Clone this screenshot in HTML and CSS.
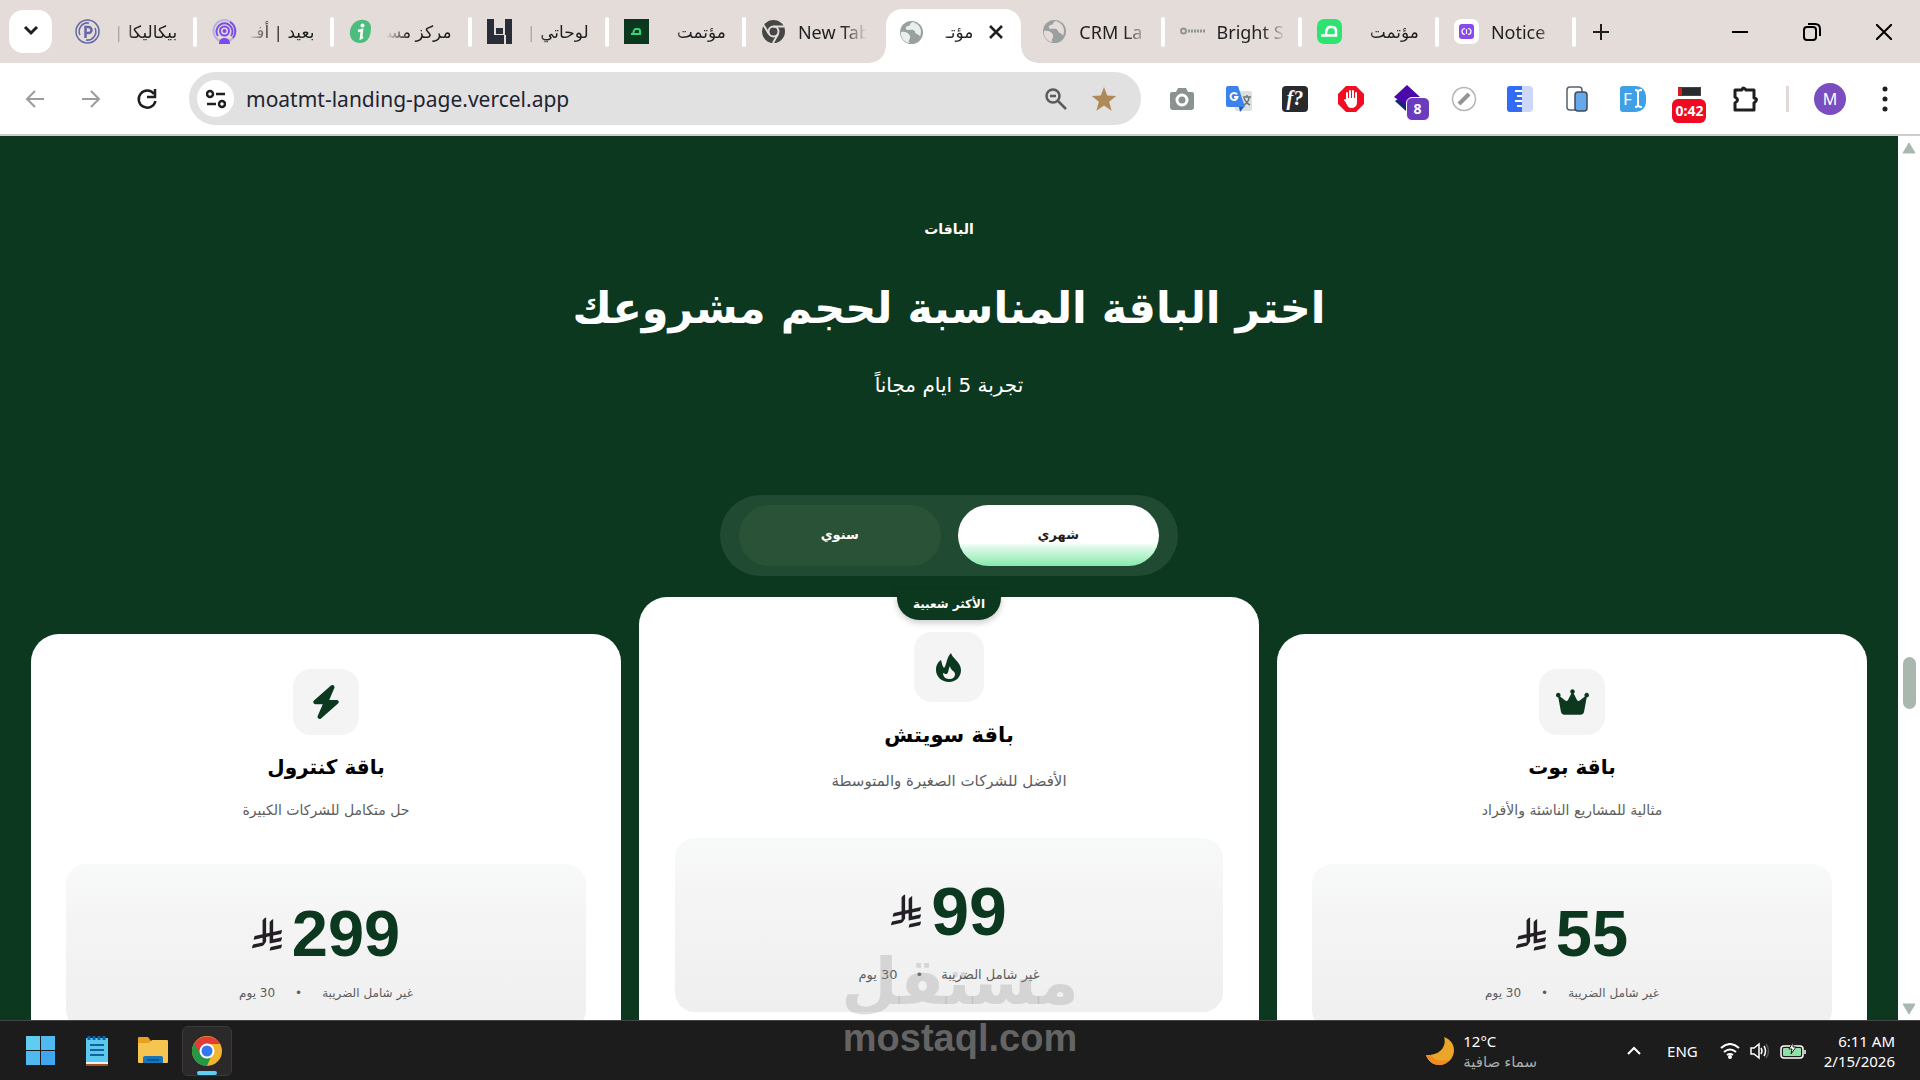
FILE: index.html
```html
<!DOCTYPE html>
<html lang="ar">
<head>
  <meta charset="UTF-8">
  <meta name="viewport" content="width=device-width, initial-scale=1.0">
  <title>مؤتمت</title>
  <link rel="stylesheet" href="styles.css">
</head>
<body>

  <!-- Tab Strip -->
  <header class="tab-strip">
    <button class="tab-search" aria-label="Search tabs">
      <svg width="16" height="12" viewBox="0 0 16 12" fill="none" stroke="#1f1f1f" stroke-width="3"><path d="M2 2l6 6 6-6"/></svg>
    </button>
    <nav class="tabs">
      <a class="tab" href="#">
        <svg class="favicon" viewBox="0 0 25 25" fill="none" stroke="#6767a8" stroke-width="1.5"><circle cx="12.5" cy="12.5" r="11.5"/><path d="M5 16a8.500 8.500 0 0 1 9-12M20 9a8.500 8.500 0 0 1-9 12"/><path d="M10.500 19V8h3a3 3 0 0 1 0 6h-3" stroke-width="2.500"/></svg>
        <span class="tab-title rtl">بيكاليكا |</span>
      </a>
      <a class="tab" href="#">
        <svg class="favicon" viewBox="0 0 25 25" fill="none"><circle cx="12.500" cy="12" r="11" stroke="#b8b5dc" stroke-width="2"/><path d="M18 3a11 11 0 0 1 3 16M6 17a8 8 0 1 1 13 0" stroke="#7d4be8" stroke-width="2"/><circle cx="12.500" cy="12" r="4.500" stroke="#7d4be8" stroke-width="2"/><circle cx="12.500" cy="12" r="2" fill="#7d4be8"/><path d="M7 25c0-4 2-6 5.500-6s5.500 2 5.500 6z" fill="#7d4be8"/></svg>
        <span class="tab-title rtl">بعيد | أفـ</span>
      </a>
      <a class="tab" href="#">
        <svg class="favicon" viewBox="0 0 25 25"><path d="M8 2C14-1 22 1 22 9c0 9-4 15-11 15S0 19 1 12C2 7 4 4 8 2z" fill="#4dbd7e"/><circle cx="13.500" cy="6.500" r="2" fill="#fff"/><path d="M9 12l4-1-1 8 2-1" stroke="#fff" stroke-width="2.500" fill="none"/></svg>
        <span class="tab-title rtl">مركز مسـ</span>
      </a>
      <a class="tab" href="#">
        <svg class="favicon" viewBox="0 0 25 25" fill="#282d37"><path d="M0 0h7v16h10v9H0zM9 9h7v6H9zM18 0h7v25h-6V16h-1z"/></svg>
        <span class="tab-title rtl">لوحاتي |</span>
      </a>
      <a class="tab" href="#">
        <svg class="favicon" viewBox="0 0 25 25"><path d="M0 0h25v25H0z" fill="#0b381e"/><path d="M7 15h9V12q0-2-2-2h-2q-2 0-3 5" fill="none" stroke="#30d975" stroke-width="2"/></svg>
        <span class="tab-title rtl">مؤتمت</span>
      </a>
      <a class="tab no-line" href="#">
        <svg class="favicon" viewBox="0 0 25 25"><circle cx="12.500" cy="12.500" r="11.500" fill="#444746"/><circle cx="12.500" cy="12.500" r="5" fill="#444746" stroke="#e3dcd9" stroke-width="2"/><path d="M12.500 7.500H23M8 15L2.500 6M17 15l-5 9" stroke="#e3dcd9" stroke-width="2"/></svg>
        <span class="tab-title">New Tab</span>
      </a>
      <a class="tab active" href="#">
        <svg class="favicon" viewBox="0 0 25 25"><circle cx="12.500" cy="12.500" r="11.500" fill="#9aa0a0"/><path d="M14 2c-4 1-2 4-5 4s-3 4 0 4 6-1 7 2 5 2 5 5c3-8-1-13-7-15zM2 12c4-1 8 1 9 4s-3 5 0 7C6 23 1 18 2 12z" fill="#e9eeee"/></svg>
        <span class="tab-title rtl">مؤتـ</span>
        <svg class="tab-close" viewBox="0 0 14 14" stroke="#1f1f1f" stroke-width="2.500"><path d="M1 1l12 12M13 1L1 13"/></svg>
      </a>
      <a class="tab" href="#">
        <svg class="favicon" viewBox="0 0 25 25"><circle cx="12.500" cy="12.500" r="11.500" fill="#9aa0a0"/><path d="M14 2c-4 1-2 4-5 4s-3 4 0 4 6-1 7 2 5 2 5 5c3-8-1-13-7-15zM2 12c4-1 8 1 9 4s-3 5 0 7C6 23 1 18 2 12z" fill="#e3dcd9"/></svg>
        <span class="tab-title">CRM La</span>
      </a>
      <a class="tab" href="#">
        <svg class="favicon" viewBox="0 0 25 25" fill="none" stroke="#8d9693"><circle cx="3.500" cy="12" r="2.500" stroke-width="2"/><path d="M8 12h17" stroke-width="3" stroke-dasharray="2 1"/></svg>
        <span class="tab-title">Bright S</span>
      </a>
      <a class="tab" href="#">
        <svg class="favicon" viewBox="0 0 25 25"><rect width="25" height="25" rx="7" fill="#2fe373"/><path d="M4 16.500h15V12q0-4-4-4h-2q-4 0-4 8" fill="none" stroke="#fff" stroke-width="2.500"/></svg>
        <span class="tab-title rtl">مؤتمت</span>
      </a>
      <a class="tab" href="#">
        <svg class="favicon" viewBox="0 0 25 25"><rect width="25" height="25" rx="7" fill="#fff"/><rect x="5" y="5" width="15" height="15" rx="3" fill="#8d48ec"/><path d="M11 9.500c-4 0-4 6 0 6M14 9.500c4 0 4 6 0 6M12.500 10v5" fill="none" stroke="#fff" stroke-width="1.200"/></svg>
        <span class="tab-title">Notice</span>
      </a>
    </nav>
    <button class="icon-btn new-tab" aria-label="New tab">
      <svg width="16" height="20" viewBox="0 0 16 20" stroke="#1f1f1f" stroke-width="2"><path d="M0 10h16M8 2v16"/></svg>
    </button>
    <div class="window-controls">
      <button class="icon-btn" aria-label="Minimize"><svg width="16" height="16" stroke="#000" stroke-width="2"><path d="M0 8h16"/></svg></button>
      <button class="icon-btn" aria-label="Restore"><svg width="18" height="18" fill="none" stroke="#000" stroke-width="2"><rect x="1" y="4" width="12" height="13" rx="3"/><path d="M5 1h7q5 0 5 5v7"/></svg></button>
      <button class="icon-btn" aria-label="Close"><svg width="16" height="16" stroke="#000" stroke-width="2"><path d="M0 0l16 16M16 0L0 16"/></svg></button>
    </div>
  </header>

  <!-- Toolbar -->
  <div class="toolbar">
    <div class="nav-buttons">
      <button class="icon-btn" aria-label="Back"><svg width="20" height="20" fill="none" stroke="#9c9c9c" stroke-width="2"><path d="M19 10H2M10 2l-8 8 8 8"/></svg></button>
      <button class="icon-btn" aria-label="Forward"><svg width="20" height="20" fill="none" stroke="#9c9c9c" stroke-width="2"><path d="M1 10h17M10 2l8 8-8 8"/></svg></button>
      <button class="icon-btn" aria-label="Reload"><svg width="22" height="22" fill="none" stroke="#1f1f1f" stroke-width="2.500"><path d="M18 6a8.500 8.500 0 1 0 1.500 7"/><path d="M19 1v8h-8"/></svg></button>
    </div>
    <div class="omnibox">
      <button class="site-info" aria-label="Site information">
        <svg width="20" height="20" fill="none" stroke="#1f1f1f" stroke-width="2.500"><circle cx="4" cy="5" r="3"/><path d="M10 5h9M1 15h9"/><circle cx="16" cy="15" r="3"/></svg>
      </button>
      <input class="address" type="text" aria-label="Address" value="moatmt-landing-page.vercel.app">
      <button class="icon-btn" aria-label="Zoom"><svg width="22" height="22" fill="none" stroke="#5b5b5b" stroke-width="2.500"><circle cx="8" cy="8" r="6.500"/><path d="M5 8h6M13 13l8 8"/></svg></button>
      <button class="icon-btn" aria-label="Bookmark"><svg width="26" height="24" viewBox="0 0 26 24" fill="#ad8a57"><path d="M13 0l3.200 8.500 9 .4-7 5.800 2.400 9L13 18.600l-7.600 5.100 2.400-9-7-5.800 9-.4z"/></svg></button>
    </div>
    <div class="extensions">
      <svg width="24" height="24"><path d="M2 5h4l2-4h8l2 4h4q2 0 2 2v13q0 3-3 3H3q-3 0-3-3V7q0-2 2-2z" fill="#8b9390"/><circle cx="12" cy="13" r="5" fill="none" stroke="#fff" stroke-width="3"/></svg>
      <svg width="26" height="26"><rect x="9" y="5" width="17" height="20" rx="2" fill="#dce0e0"/><path d="M17 11h8M21 9v2M18 19q5-3 5-8M18 12q2 5 6 7" stroke="#6c7676" stroke-width="1.500" fill="none"/><path d="M2 0h10l7 21H2q-2 0-2-2V2q0-2 2-2z" fill="#3b82ec"/><path d="M13 21h5l-4 5z" fill="#2856b8"/><path d="M11 8.500a3.500 3.500 0 1 0 .5 2.500H8" stroke="#fff" stroke-width="2" fill="none"/></svg>
      <span class="ext-font">f?</span>
      <svg width="26" height="26"><path d="M8 0h10l8 8v10l-8 8H8l-8-8V8z" fill="#f20d20"/><path d="M9 14V7M12 13V5M15 13V5M18 15V7M7 14l4 5" stroke="#fff" stroke-width="2" stroke-linecap="round"/><path d="M8 12h11v4q0 6-6 6-3 0-5-5z" fill="#fff"/></svg>
      <span class="ext-stack"><svg width="28" height="28"><path d="M13 8l13 8-13 11L1 16z" fill="#152774"/><path d="M13 0l13 12-13 9L0 12z" fill="#4b08ab"/></svg><span class="count">8</span></span>
      <svg width="26" height="26"><circle cx="13" cy="13" r="11.500" fill="#fff" stroke="#b3b6b5" stroke-width="1.500"/><path d="M8 18l10-10" stroke="#929593" stroke-width="4"/></svg>
      <svg width="26" height="26"><rect width="26" height="26" rx="4" fill="#cdd8f8"/><path d="M3 0h12v26H3q-3 0-3-3V3q0-3 3-3z" fill="#326cf5"/><path d="M8 5h7M10 10h5M8 15h7M10 20h5" stroke="#fff" stroke-width="2"/></svg>
      <svg width="24" height="26"><rect x="2" y="1" width="15" height="23" rx="3" fill="#fff" stroke="#536170" stroke-width="1.500"/><rect x="10" y="6" width="12" height="19" rx="3" fill="#65a9ed" stroke="#3e4b58" stroke-width="1.500"/></svg>
      <span class="ext-fi">F<svg width="9" height="19" fill="none" stroke="#fff" stroke-width="2"><path d="M1 1q3 0 3 2 0-2 4-2M4 3v13M1 18q3 0 3-2 0 2 4 2"/></svg></span>
      <span class="ext-timer"><span class="screen"></span><span class="time">0:42</span></span>
      <svg width="28" height="28" fill="none" stroke="#1f1f1f" stroke-width="3"><path d="M3 5h7q1-4 4 0h8v8q5 1 0 5v7H3v-7q5-3 0-6z" stroke-linejoin="round"/></svg>
    </div>
    <span class="divider"></span>
    <button class="avatar" aria-label="Profile">M</button>
    <button class="icon-btn menu" aria-label="Menu"><svg width="6" height="26" fill="#1f1f1f"><circle cx="3" cy="3" r="2.500"/><circle cx="3" cy="13" r="2.500"/><circle cx="3" cy="23" r="2.500"/></svg></button>
  </div>

  <!-- Page -->
  <div class="viewport">
    <main class="pricing" dir="rtl">
      <p class="eyebrow">الباقات</p>
      <h1>اختر الباقة المناسبة لحجم مشروعك</h1>
      <p class="subtitle">تجربة 5 ايام مجاناً</p>

      <div class="billing-toggle">
        <button class="period selected">شهري</button>
        <button class="period">سنوي</button>
      </div>

      <div class="plans">
        <section class="plan">
          <span class="plan-icon">
            <svg width="33" height="30" viewBox="0 0 576 512" fill="#0b381e"><path d="M309 106c11.400-7 19-19.700 19-34c0-22.100-17.900-40-40-40s-40 17.900-40 40c0 14.400 7.600 27 19 34L209.700 220.600c-9.100 18.200-32.700 23.400-48.600 10.700L72 160c5-6.700 8-15 8-24c0-22.100-17.900-40-40-40S0 113.900 0 136s17.900 40 40 40h.7L86.400 427.400c5.500 30.400 32 52.600 63 52.600H426.600c30.900 0 57.400-22.100 63-52.600L535.300 176h.7c22.100 0 40-17.900 40-40s-17.900-40-40-40s-40 17.900-40 40c0 9 3 17.300 8 24l-89.100 71.300c-15.900 12.700-39.500 7.500-48.600-10.700L309 106z"/></svg>
          </span>
          <h2>باقة بوت</h2>
          <p class="plan-text">مثالية للمشاريع الناشئة والأفراد</p>
          <div class="price-box">
            <div class="price">55 <svg class="riyal" viewBox="0 0 1124 1256"><use href="#riyal"/></svg></div>
            <p class="price-note"><span>غير شامل الضريبة</span><span>•</span><span>30 يوم</span></p>
          </div>
        </section>

        <section class="plan featured">
          <span class="badge">الأكثر شعبية</span>
          <span class="plan-icon">
            <svg width="26" height="29" viewBox="0 0 26 29"><path d="M15 0c1 5 10 9 10 17 0 7-5 12-12 12S0 24 0 17C0 12 2 9 5 7c1 3 1 6 3 8 3-3 2-10 7-15z" fill="#0b381e"/><path d="M14 13c0 4 5 5 5 8 0 3-2 5-6 5s-6-3-6-6c2 1 3 1 4 1 2-2 1-5 3-8z" fill="#f4f4f4"/></svg>
          </span>
          <h2>باقة سويتش</h2>
          <p class="plan-text">الأفضل للشركات الصغيرة والمتوسطة</p>
          <div class="price-box">
            <div class="price">99 <svg class="riyal" viewBox="0 0 1124 1256"><use href="#riyal"/></svg></div>
            <p class="price-note"><span>غير شامل الضريبة</span><span>•</span><span>30 يوم</span></p>
          </div>
        </section>

        <section class="plan">
          <span class="plan-icon">
            <svg width="30" height="34" viewBox="0 0 448 512" fill="#0b381e"><path d="M349.400 44.600c5.900-13.700 1.500-29.700-10.600-38.500s-28.600-8-39.900 1.800l-256 224c-10 8.800-13.600 22.900-8.900 35.300S50.700 288 64 288H175.500L98.600 467.400c-5.900 13.700-1.500 29.700 10.600 38.500s28.600 8 39.900-1.800l256-224c10-8.800 13.600-22.900 8.900-35.300s-16.600-20.700-30-20.700H272.500L349.400 44.600z"/></svg>
          </span>
          <h2>باقة كنترول</h2>
          <p class="plan-text">حل متكامل للشركات الكبيرة</p>
          <div class="price-box">
            <div class="price">299 <svg class="riyal" viewBox="0 0 1124 1256"><use href="#riyal"/></svg></div>
            <p class="price-note"><span>غير شامل الضريبة</span><span>•</span><span>30 يوم</span></p>
          </div>
        </section>
      </div>
    </main>

    <div class="scrollbar">
      <svg width="14" height="12" fill="#a9b8ae"><path d="M7 1l6 10H1z" stroke="#a9b8ae" stroke-linejoin="round"/></svg>
      <span class="track"><span class="thumb"></span></span>
      <svg width="14" height="12" fill="#a9b8ae"><path d="M7 11l6-10H1z" stroke="#a9b8ae" stroke-linejoin="round"/></svg>
    </div>
  </div>

  <!-- Taskbar -->
  <footer class="taskbar">
    <div class="apps">
      <button class="icon-btn" aria-label="Start"><svg width="30" height="30"><path d="M0 0h14v14H0z" fill="#5fcdf1"/><path d="M15 0h14v14H15zM0 15h14v14H0z" fill="#50b9ef"/><path d="M15 15h14v14H15z" fill="#3ea7ee"/></svg></button>
      <button class="icon-btn" aria-label="Notepad"><svg width="22" height="30"><path d="M0 2h22v25H0z" fill="#5cc8ee"/><path d="M0 26h22v2H0z" fill="#f0f0f0"/><path d="M0 28h22v2H0z" fill="#a5501f"/><path d="M4 9h14M4 14h14M4 19h14" stroke="#10629e" stroke-width="2"/><path d="M3 0v4M8 0v4M13 0v4M18 0v4" stroke="#0d62a8" stroke-width="3"/></svg></button>
      <button class="icon-btn" aria-label="Files"><svg width="30" height="27"><path d="M0 1q0-1 1-1h9l3 4v8H0z" fill="#e9a01e"/><path d="M0 6h11l3-3h15q1 0 1 1v21q0 1-1 1H1q-1 0-1-1z" fill="#f6c450"/><path d="M5 26v-5q0-2 2-2h16q2 0 2 2v5z" fill="#1675bb"/><path d="M9 23h12" stroke="#0d4f8a" stroke-width="1.500"/></svg></button>
      <button class="icon-btn running" aria-label="Chrome"><svg width="30" height="30"><circle cx="15" cy="15" r="15" fill="#f3b530"/><path d="M15 15V8h13A15 15 0 0 0 2 8l6 10z" fill="#e33b36"/><path d="M2 7.500l7 11 10 2-4 9.500A15 15 0 0 1 2 7.500z" fill="#279745"/><circle cx="15" cy="15" r="7.500" fill="#fff"/><circle cx="15" cy="15" r="5.500" fill="#3478f0"/></svg></button>
    </div>
    <div class="tray">
      <div class="weather">
        <svg width="28" height="28"><path d="M18 0c3 8-3 19-18 18 2 6 7 10 13 10 9 0 15-7 15-15C28 7 24 2 18 0z" fill="#eba528"/><path d="M0 18c2 6 7 10 13 10 5 0 8-2 10-5-8 2-15 0-18-5z" fill="#f08a24"/></svg>
        <p>12°C<br><span>سماء صافية</span></p>
      </div>
      <button class="icon-btn" aria-label="Hidden icons"><svg width="14" height="10" fill="none" stroke="#fff" stroke-width="2"><path d="M1 8l6-6 6 6"/></svg></button>
      <span class="language">ENG</span>
      <div class="status">
        <svg width="20" height="16" fill="none" stroke="#fff" stroke-width="2"><path d="M1 5q9-8 18 0M4 9q6-5 12 0M7 12q3-2 6 0"/><circle cx="10" cy="14" r="1" fill="#fff"/></svg>
        <svg width="20" height="18" fill="none" stroke="#fff" stroke-width="1.500"><path d="M1 6h3l5-4v14l-5-4H1zM11 6q2 3 0 6M14 4q3 5 0 10"/><path d="M16 2q5 7 0 14" stroke="#555"/></svg>
        <svg width="26" height="18" fill="none" stroke="#fff" stroke-width="1.500"><rect x="1" y="4" width="22" height="12" rx="3"/><rect x="3" y="6" width="18" height="8" rx="1" fill="#8ee0a8" stroke="none"/><path d="M25 8v4"/><path d="M13 0L9 7h3l-1 5 5-7h-3z" fill="#fff" stroke="#1c1c1c" stroke-width="1"/></svg>
      </div>
      <p class="clock">6:11 AM<br>2/15/2026</p>
    </div>
  </footer>

  <!-- Watermark -->
  <div class="watermark" aria-hidden="true">
    <span class="mark-ar">مستقل</span>
    <span class="mark-en">mostaql.com</span>
  </div>

  <!-- Shared currency symbol -->
  <svg class="symbols" width="0" height="0">
    <symbol id="riyal" viewBox="0 0 1124 1256"><path d="M699.620 1113.020c-20.060 44.480-33.320 92.750-38.400 143.370l424.510-90.240c20.060-44.470 33.310-92.750 38.400-143.370l-424.510 90.240ZM1085.730 895.800c20.060-44.470 33.320-92.750 38.400-143.370l-330.680 70.330v-135.200l292.270-62.110c20.060-44.470 33.320-92.750 38.400-143.370l-330.680 70.270V66.130c-50.670 28.450-95.670 66.320-132.250 110.990v403.350l-132.250 28.110V0c-50.670 28.440-95.670 66.320-132.250 110.990v525.690l-295.910 62.880c-20.060 44.470-33.330 92.750-38.420 143.370l334.330-71.050v170.260l-358.300 76.140c-20.060 44.470-33.320 92.750-38.400 143.370l375.040-79.700c30.530-6.350 56.770-24.400 73.830-49.240l68.780-101.970v-.02c7.140-10.550 11.300-23.270 11.300-36.970v-149.980l132.250-28.110v270.400l424.530-90.280Z" fill="#231f24"/></symbol>
  </svg>

</body>
</html>
```
FILE: styles.css
```css
/* Global Styles */
* {
  box-sizing: border-box;
}

body {
  margin: 0;
  height: 100vh;
  display: flex;
  flex-direction: column;
  overflow: hidden;
  background-color: #ffffff;
  font-family: 'Noto Sans', 'DejaVu Sans', sans-serif;
  color: #1f1f1f;
}

h1, h2, p {
  margin: 0;
}

svg {
  flex: none;
}

button {
  font-family: inherit;
  border: none;
  cursor: pointer;
}

.icon-btn {
  display: flex;
  align-items: center;
  justify-content: center;
  padding: 0;
  background: none;
}

/* Tab Strip */
.tab-strip {
  display: flex;
  align-items: center;
  height: 63px;
  flex: none;
  padding-left: 9px;
  background-color: #e3dcd9;
}

.tab-search {
  width: 43px;
  height: 43px;
  padding: 0;
  border-radius: 14px;
  background-color: #ffffff;
}

.tabs {
  display: flex;
  align-self: stretch;
  flex: 0 1 1524px;
  min-width: 0;
  padding-left: 10px;
}

.tab {
  flex: 1;
  min-width: 0;
  display: flex;
  align-items: center;
  gap: 12px;
  padding-left: 15px;
  color: #1f1f1f;
  font-size: 18px;
  text-decoration: none;
}

.tab:first-child {
  padding-left: 13px;
}

.tab::after {
  content: "";
  width: 4px;
  height: 30px;
  flex: none;
  border-radius: 2px;
  background-color: #ffffff;
}

.tab.no-line::after {
  background: none;
}

.favicon {
  width: 25px;
  height: 25px;
}

.tab-title {
  flex: 1;
  min-width: 0;
  overflow: hidden;
  white-space: nowrap;
  line-height: 32px;
  mask-image: linear-gradient(to right, #000 65%, transparent);
}

.tab-title.rtl {
  direction: rtl;
  font-size: 17px;
  margin-right: 4px;
  mask-image: linear-gradient(to left, #000 65%, transparent);
}

.tab.active {
  position: relative;
  align-self: flex-end;
  height: 54px;
  margin: 0 6px 0 3px;
  padding-left: 13px;
  padding-bottom: 8px;
  border-radius: 16px 16px 0 0;
  background-color: #ffffff;
}

/* Curved feet of the active tab */
.tab.active::before,
.tab.active::after {
  content: "";
  position: absolute;
  bottom: 0;
  width: 16px;
  height: 16px;
  border-radius: 0;
  background: radial-gradient(circle at 0 0, transparent 15px, #ffffff 16px);
}

.tab.active::before {
  right: 100%;
}

.tab.active::after {
  left: 100%;
  background: radial-gradient(circle at 100% 0, transparent 15px, #ffffff 16px);
}

.tab-close {
  width: 14px;
  height: 14px;
  margin-right: 18px;
}

.new-tab {
  width: 50px;
  height: 40px;
}

.window-controls {
  display: flex;
  margin-left: auto;
}

.window-controls .icon-btn {
  width: 72px;
  height: 62px;
}

/* Toolbar */
.toolbar {
  display: flex;
  align-items: center;
  height: 73px;
  flex: none;
  padding: 0 22px 0 7px;
  border-bottom: 2px solid #cfcfcf;
}

.nav-buttons {
  display: flex;
  margin-right: 14px;
}

.nav-buttons .icon-btn {
  width: 56px;
  height: 40px;
}

.omnibox {
  display: flex;
  align-items: center;
  flex: 1;
  min-width: 0;
  height: 53px;
  padding: 0 24px 0 8px;
  gap: 24px;
  border-radius: 27px;
  background-color: #e1e1e1;
}

.site-info {
  display: flex;
  align-items: center;
  justify-content: center;
  width: 37px;
  height: 37px;
  flex: none;
  padding: 0;
  border-radius: 50%;
  background-color: #ffffff;
}

.address {
  flex: 1;
  min-width: 0;
  margin-left: -12px;
  padding: 0;
  border: none;
  outline: none;
  background: none;
  color: #1f2430;
  font-family: inherit;
  font-size: 21px;
}

.extensions {
  display: grid;
  grid-template-columns: repeat(11, 1fr);
  width: 620px;
  margin-left: 13px;
  align-items: center;
  justify-items: center;
}

.ext-font {
  width: 26px;
  height: 26px;
  border-radius: 4px;
  background-color: #292a2d;
  color: #ffffff;
  font: italic bold 20px/24px 'Liberation Serif', serif;
  text-align: center;
}

.ext-stack {
  position: relative;
  width: 28px;
  height: 28px;
}

.count {
  position: absolute;
  left: 12px;
  top: 12px;
  width: 24px;
  height: 24px;
  border: 1px solid #ffffff;
  border-radius: 6px;
  background-color: #6b3dbd;
  color: #ffffff;
  font-size: 14px;
  font-weight: bold;
  line-height: 22px;
  text-align: center;
}

.ext-fi {
  display: flex;
  align-items: center;
  gap: 2px;
  width: 26px;
  height: 26px;
  padding-left: 3px;
  border-radius: 3px 10px 10px 3px;
  background-color: #40a0e5;
  color: #ffffff;
  font-size: 17px;
  line-height: 26px;
}

.ext-timer {
  display: flex;
  flex-direction: column;
  align-items: center;
  gap: 3px;
  margin-top: 12px;
}

.screen {
  width: 23px;
  height: 9px;
  border: 1px solid #444444;
  border-left: 4px solid #d21f26;
  background-color: #292a2d;
}

.time {
  padding: 0 3px;
  border-radius: 6px;
  background-color: #ef0b22;
  color: #ffffff;
  font-size: 14px;
  font-weight: bold;
  line-height: 24px;
}

.divider {
  width: 3px;
  height: 26px;
  margin: 0 25px 0 12px;
  background-color: #e0d9d6;
}

.avatar {
  width: 32px;
  height: 32px;
  padding: 0;
  border-radius: 50%;
  background-color: #7a4dc0;
  color: #ffffff;
  font-size: 16px;
}

.menu {
  width: 26px;
  height: 32px;
  margin-left: 26px;
}

/* Page */
.viewport {
  display: flex;
  flex: 1;
  min-height: 0;
}

.pricing {
  flex: 1;
  min-width: 0;
  overflow: hidden;
  padding: 79px 31px 0;
  background-color: #0b381e;
  color: #ffffff;
  font-family: 'DejaVu Sans', sans-serif;
  text-align: center;
}

.eyebrow {
  font-size: 14px;
  font-weight: bold;
  line-height: 28px;
}

h1 {
  margin-top: 25px;
  font-size: 43px;
  line-height: 80px;
}

.subtitle {
  margin-top: 21px;
  font-size: 20px;
  line-height: 32px;
}

.billing-toggle {
  display: flex;
  gap: 17px;
  width: 458px;
  max-width: 100%;
  margin: 94px auto 0;
  padding: 10px 19px;
  border-radius: 41px;
  background-color: #204a31;
}

.period {
  flex: 1;
  height: 61px;
  padding: 0 0 2px;
  border-radius: 31px;
  background-color: #2a5237;
  color: #ffffff;
  font-size: 13px;
  font-weight: bold;
}

.period.selected {
  background: linear-gradient(#ffffff 62%, #dcf9e9 70%, #86eaaa);
  color: #1f1f1f;
}

/* Plans */
.plans {
  display: grid;
  grid-template-columns: 590fr 620fr 590fr;
  gap: 18px;
  margin-top: 21px;
}

.plan {
  display: flex;
  flex-direction: column;
  align-items: center;
  margin-top: 37px;
  padding: 35px;
  border-radius: 28px;
  background-color: #ffffff;
  color: #000000;
}

.plan-icon {
  display: flex;
  align-items: center;
  justify-content: center;
  width: 66px;
  height: 66px;
  border-radius: 18px;
  background-color: #f4f4f4;
}

.plan h2 {
  margin-top: 12px;
  font-size: 20px;
  line-height: 40px;
}

.plan-text {
  margin-top: 9px;
  color: #5d5d5d;
  font-size: 14px;
  line-height: 28px;
}

.price-box {
  align-self: stretch;
  margin-top: 40px;
  padding: 38px 0 25px;
  border-radius: 20px;
  background: linear-gradient(#f8faf9, #f4f4f4 35%, #efefef);
}

.price {
  display: flex;
  align-items: center;
  justify-content: center;
  gap: 10px;
  color: #0b381e;
  font-family: 'Liberation Sans', sans-serif;
  font-size: 65px;
  font-weight: bold;
  line-height: 64px;
}

.riyal {
  width: 30px;
  height: 34px;
}

.price-note {
  display: flex;
  justify-content: center;
  gap: 20px;
  margin-top: 15px;
  color: #5d5d5d;
  font-size: 12px;
  line-height: 24px;
}

/* Most popular plan */
.plan.featured {
  position: relative;
  margin-top: 0;
  padding: 35px 36px;
}

.badge {
  position: absolute;
  top: -8px;
  padding: 2px 16px 3px;
  border-radius: 0 0 22px 22px;
  background-color: #0b381e;
  box-shadow: 0 3px 6px rgba(0, 0, 0, 0.2);
  color: #ffffff;
  font-size: 12px;
  font-weight: bold;
  line-height: 26px;
}

.featured .plan-icon {
  width: 70px;
  height: 70px;
}

.featured h2 {
  margin-top: 13px;
  font-size: 21px;
}

.featured .plan-text {
  margin-top: 12px;
  font-size: 15px;
}

.featured .price-box {
  margin-top: 43px;
}

.featured .price {
  font-size: 68px;
  line-height: 70px;
}

.featured .price-note {
  gap: 18px;
  margin-top: 17px;
  font-size: 13px;
}

/* Scrollbar */
.scrollbar {
  display: flex;
  flex-direction: column;
  align-items: center;
  width: 22px;
  flex: none;
  padding: 6px 0 5px;
  background-color: #ffffff;
}

.track {
  flex: 1;
  display: flex;
  flex-direction: column;
  padding-top: 503px;
}

.thumb {
  width: 13px;
  height: 52px;
  border-radius: 7px;
  background-color: #a9b8ae;
}

/* Taskbar */
.taskbar {
  display: flex;
  align-items: center;
  justify-content: space-between;
  height: 60px;
  flex: none;
  padding: 0 25px 0 26px;
  border-top: 1px solid #454545;
  background-color: #1c1c1c;
  color: #ffffff;
  font-size: 15px;
}

.apps {
  display: flex;
  align-items: center;
  gap: 30px;
}

.running {
  width: 50px;
  height: 50px;
  margin-left: -16px;
  border: 1px solid #3a3a3a;
  border-radius: 6px;
  background-color: #2c292b;
  position: relative;
}

.running::after {
  content: "";
  position: absolute;
  bottom: 0;
  width: 20px;
  height: 4px;
  border-radius: 2px;
  background-color: #60cdf5;
}

.tray {
  display: flex;
  align-items: center;
}

.weather {
  display: flex;
  align-items: center;
  gap: 9px;
  margin-right: 90px;
  line-height: 20px;
}

.weather span {
  color: #a9adab;
  font-size: 15px;
}

.language {
  margin: 0 22px 0 26px;
}

.status {
  display: flex;
  align-items: center;
  gap: 10px;
  margin-right: 18px;
}

.clock {
  line-height: 20px;
  text-align: right;
}

/* Watermark */
.watermark {
  position: absolute;
  left: 0;
  right: 0;
  bottom: 20px;
  display: flex;
  flex-direction: column;
  align-items: center;
  color: rgba(150, 150, 150, 0.3);
  font-family: 'Liberation Sans', 'DejaVu Sans', sans-serif;
  font-weight: bold;
  pointer-events: none;
}

.mark-ar {
  font-family: 'DejaVu Sans', sans-serif;
  font-size: 65px;
  line-height: 68px;
}

.mark-en {
  color: rgba(150, 150, 150, 0.6);
  font-size: 38px;
  line-height: 44px;
}

.symbols {
  position: absolute;
}
```
